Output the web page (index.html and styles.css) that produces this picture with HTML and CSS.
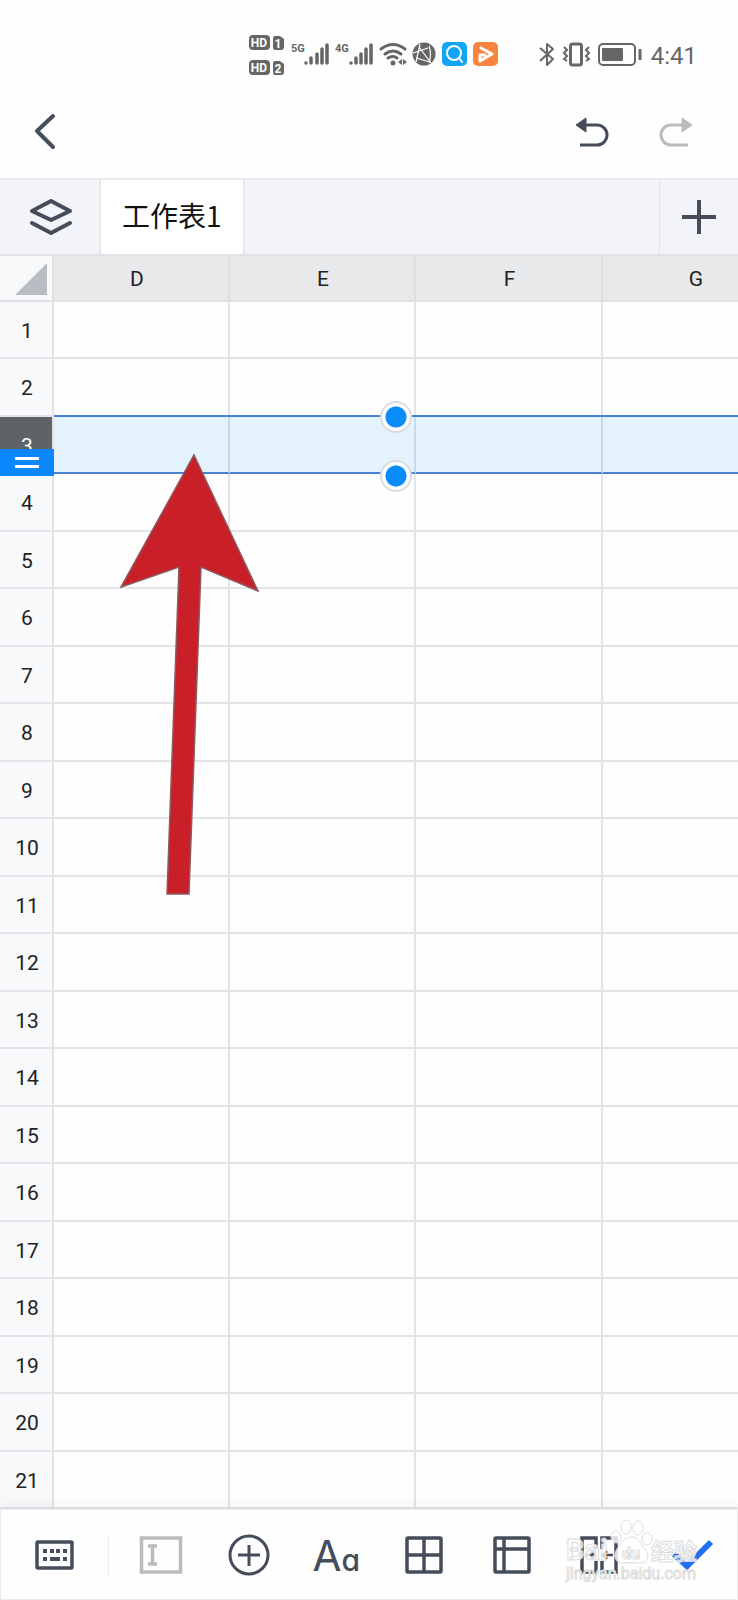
FILE: index.html
```
<!DOCTYPE html>
<html lang="zh-CN">
<head>
    <meta charset="UTF-8">
    <meta name="viewport" content="width=device-width, initial-scale=1.0">
    <title>工作表1</title>
    <link rel="stylesheet" href="styles.css">
</head>
<body>
    <div class="status-bar">
        <svg width="250" height="42" viewBox="0 0 250 42">
            <g fill="#666">
                <rect x="1" y="1" width="21" height="15" rx="4"/>
                <path d="M27 2h5l4 3v8q0 3-3 3h-6q-2 0-2-3v-9q0-2 2-2z"/>
                <rect x="1" y="26" width="21" height="15" rx="4"/>
                <path d="M27 27h5l4 3v8q0 3-3 3h-6q-2 0-2-3v-9q0-2 2-2z"/>
            </g>
            <g class="badge-text">
                <text x="11" y="13">HD</text>
                <text x="30" y="14">1</text>
                <text x="11" y="38">HD</text>
                <text x="30" y="39">2</text>
            </g>
            <text class="net-text" x="43" y="18">5G</text>
            <text class="net-text" x="87" y="18">4G</text>
            <path d="M58 29v0M63 29v-5M69 29v-9M74 29v-14M79 29v-18M103 29v0M108 29v-5M113 29v-9M118 29v-14M123 29v-18" stroke="#666" stroke-width="3.500" stroke-linecap="round"/>
            <g fill="none" stroke="#666" stroke-width="3" stroke-linecap="round">
                <path d="M133 15q12-9 24 0M137 20q8-6 16 0M140 24q5-3 9 0"/>
            </g>
            <circle cx="145" cy="29" r="2.5" fill="#666"/>
            <path d="M154 25v6l-4-3zM155 25v6l4-3z" fill="#666"/>
            <circle cx="176" cy="20" r="11.5" fill="#666"/>
            <path d="M165 19l15-5M172 10l-4 18M168 24l14 4M171 13l12 16M181 12q3 8 0 17" fill="none" stroke="#fff" stroke-width="1.2"/>
            <rect x="194" y="8" width="25" height="24" rx="5" fill="#12a5f6"/>
            <circle cx="206" cy="19" r="7" fill="none" stroke="#fff" stroke-width="2"/>
            <path d="M211 24l3 4" stroke="#fff" stroke-width="2" stroke-linecap="round"/>
            <rect x="225" y="8" width="25" height="24" rx="5" fill="#f98440"/>
            <path d="M233 14l11 6-12 7v-6h5" fill="none" stroke="#fff" stroke-width="3" stroke-linejoin="round" stroke-linecap="round"/>
        </svg>
        <div class="status-right">
            <svg width="104" height="42" viewBox="0 0 104 42" fill="none" stroke="#666" stroke-width="2">
                <path d="M2 14l13 11-6 6V10l6 5L2 27" stroke-linejoin="round"/>
                <rect x="32.500" y="10" width="11" height="21" rx="2" stroke-width="3"/>
                <path d="M26 13l3 3-3 3 3 3-3 3 3 2M51 13l-3 3 3 3-3 3 3 3-3 2"/>
                <rect x="61" y="10" width="36" height="21" rx="4"/>
                <rect x="64" y="14" width="21" height="13" rx="1" fill="#666" stroke="none"/>
                <path d="M102 15v11" stroke-width="3"/>
            </svg>
            <span class="clock">4:41</span>
        </div>
    </div>

    <header class="toolbar">
        <button class="icon-btn" aria-label="返回">
            <svg width="34" height="40" viewBox="0 0 34 40"><path d="M25 5L9 20l16 16" fill="none" stroke="#464d5a" stroke-width="4" stroke-linecap="round" stroke-linejoin="round"/></svg>
        </button>
        <div class="history">
            <button class="icon-btn" aria-label="撤销">
                <svg width="34" height="32" viewBox="0 0 34 32"><path d="M10 8h12a10 10 0 0 1 0 20H5" fill="none" stroke="#464d5a" stroke-width="3"/><path d="M1 8L11 1v14z" fill="#464d5a" stroke="#464d5a" stroke-linejoin="round"/></svg>
            </button>
            <button class="icon-btn" aria-label="重做" disabled>
                <svg width="34" height="32" viewBox="0 0 34 32"><path d="M24 8H12a10 10 0 0 0 0 20h17" fill="none" stroke="#b9bbbf" stroke-width="3"/><path d="M33 8L23 1v14z" fill="#b9bbbf" stroke="#b9bbbf" stroke-linejoin="round"/></svg>
            </button>
        </div>
    </header>

    <nav class="tabs">
        <button class="icon-btn layers" aria-label="所有工作表">
            <svg width="44" height="38" viewBox="0 0 44 38" fill="none" stroke="#464d5a" stroke-width="4" stroke-linejoin="round" stroke-linecap="round"><path d="M22 3L41 13 22 22 3 13zM3 25l19 10 19-10"/></svg>
        </button>
        <button class="tab">工作表1</button>
        <button class="icon-btn add" aria-label="新建工作表">
            <svg width="34" height="34" viewBox="0 0 34 34"><path d="M17 0v34M0 17h34" stroke="#464d5a" stroke-width="4"/></svg>
        </button>
    </nav>

    <main class="sheet">
        <table>
            <colgroup>
                <col class="col-num"><col class="col-first"><col class="col"><col class="col-wide"><col class="col">
            </colgroup>
            <thead>
                <tr>
                    <th class="corner"><svg width="32" height="32" viewBox="0 0 32 32"><path d="M32 0v32H0z" fill="#b9bdc3"/></svg></th>
                    <th class="cut">D</th><th>E</th><th>F</th><th>G</th>
                </tr>
            </thead>
            <tbody>
                <tr><th>1</th><td></td><td></td><td></td><td></td></tr>
                <tr><th>2</th><td></td><td></td><td></td><td></td></tr>
                <tr class="selected">
                    <th>3<span class="resize"></span></th>
                    <td></td>
                    <td><span class="knob knob-top"></span><span class="knob knob-bottom"></span></td>
                    <td></td>
                    <td></td>
                </tr>
                <tr><th>4</th><td></td><td></td><td></td><td></td></tr>
                <tr><th>5</th><td></td><td></td><td></td><td></td></tr>
                <tr><th>6</th><td></td><td></td><td></td><td></td></tr>
                <tr><th>7</th><td></td><td></td><td></td><td></td></tr>
                <tr><th>8</th><td></td><td></td><td></td><td></td></tr>
                <tr><th>9</th><td></td><td></td><td></td><td></td></tr>
                <tr><th>10</th><td></td><td></td><td></td><td></td></tr>
                <tr><th>11</th><td></td><td></td><td></td><td></td></tr>
                <tr><th>12</th><td></td><td></td><td></td><td></td></tr>
                <tr><th>13</th><td></td><td></td><td></td><td></td></tr>
                <tr><th>14</th><td></td><td></td><td></td><td></td></tr>
                <tr><th>15</th><td></td><td></td><td></td><td></td></tr>
                <tr><th>16</th><td></td><td></td><td></td><td></td></tr>
                <tr><th>17</th><td></td><td></td><td></td><td></td></tr>
                <tr><th>18</th><td></td><td></td><td></td><td></td></tr>
                <tr><th>19</th><td></td><td></td><td></td><td></td></tr>
                <tr><th>20</th><td></td><td></td><td></td><td></td></tr>
                <tr><th>21</th><td></td><td></td><td></td><td></td></tr>
            </tbody>
        </table>
        <svg class="arrow" width="140" height="444" viewBox="0 0 140 444"><path d="M74 2L138 138 81 114 69 441H47L59 114 1 134z" fill="#c81f28" stroke="#8d5a60" stroke-width="1.500"/></svg>
    </main>

    <footer class="bottom-bar">
        <button class="icon-btn keyboard" aria-label="键盘">
            <svg width="40" height="30" viewBox="0 0 40 30"><rect x="2" y="2" width="35" height="26" rx="1" fill="none" stroke="#464d5a" stroke-width="3.500"/><path d="M8 11h4M15 11h4M21 11h4M28 11h4M8 19h4M15 19h10M28 19h4" stroke="#464d5a" stroke-width="4"/></svg>
        </button>
        <button class="icon-btn" aria-label="编辑文本" disabled>
            <svg width="44" height="38" viewBox="0 0 44 38" fill="none" stroke="#bbb" stroke-width="3.500"><rect x="2.500" y="2" width="39" height="34"/><path d="M9 10h9M9 28h9M13.500 10v18"/></svg>
        </button>
        <button class="icon-btn" aria-label="插入">
            <svg width="42" height="42" viewBox="0 0 42 42" fill="none" stroke="#464d5a" stroke-width="3"><circle cx="21" cy="21" r="19"/><path d="M21 11v21M10 21h22"/></svg>
        </button>
        <button class="icon-btn font" aria-label="字体">A<small>a</small></button>
        <button class="icon-btn" aria-label="边框">
            <svg width="38" height="38" viewBox="0 0 38 38" fill="none" stroke="#464d5a" stroke-width="3.500"><rect x="2" y="2" width="34" height="34" rx="1"/><path d="M19 2v34M2 19h34"/></svg>
        </button>
        <button class="icon-btn" aria-label="冻结">
            <svg width="38" height="38" viewBox="0 0 38 38" fill="none" stroke="#464d5a" stroke-width="3.500"><rect x="2" y="2" width="34" height="34" rx="1"/><path d="M11 2v34M2 13h34"/></svg>
        </button>
        <button class="icon-btn" aria-label="合并单元格">
            <svg width="38" height="38" viewBox="0 0 38 38" fill="none" stroke="#464d5a" stroke-width="3.500"><path d="M16 13V2H2v34h14V25M22 13V2h14v34H22V25"/><path d="M5 19h9M33 19h-9M11 15l4 4-4 4M27 15l-4 4 4 4" stroke-width="2.500"/></svg>
        </button>
        <button class="icon-btn done" aria-label="完成">
            <svg width="42" height="32" viewBox="0 0 42 32"><path d="M2 15l13 12L39 3" fill="none" stroke="#2370f2" stroke-width="6"/></svg>
        </button>
        <div class="watermark">
            <svg width="150" height="68" viewBox="0 -4 150 68">
                <g fill="#fff" fill-opacity=".8" stroke="#ddd">
                    <ellipse cx="53" cy="14" rx="5" ry="6"/>
                    <ellipse cx="63" cy="4" rx="5" ry="7"/>
                    <ellipse cx="75" cy="5" rx="5" ry="7"/>
                    <ellipse cx="84" cy="16" rx="5" ry="6"/>
                    <path d="M69 14c7 0 8 7 13 12 6 7 2 14-5 14-4 0-11-1-16 0-8 1-12-7-7-14 4-5 7-12 15-12z"/>
                </g>
                <g class="mark">
                    <text class="mark-big" x="3" y="37">Bai</text>
                    <text class="mark-du" x="59" y="36">du</text>
                    <text class="mark-cn" x="88" y="37">经验</text>
                    <text class="mark-url" x="3" y="56">jingyan.baidu.com</text>
                </g>
            </svg>
        </div>
    </footer>
</body>
</html>
```
FILE: styles.css
```
* {
    box-sizing: border-box;
}
body {
    margin: 0;
    min-height: 100vh;
    display: flex;
    flex-direction: column;
    overflow-x: hidden;
    background-color: #fefefe;
    color: #222;
    font-family: Roboto, "Noto Sans CJK SC", sans-serif;
}
svg {
    display: block;
}
button {
    border: none;
    background: none;
    padding: 0;
    color: inherit;
    font-family: inherit;
    cursor: pointer;
}
.icon-btn {
    display: flex;
    align-items: center;
    justify-content: center;
}

/* status bar */
.status-bar {
    height: 90px;
    padding: 20px 41px 0 0;
    display: flex;
    align-items: center;
    justify-content: flex-end;
    gap: 40px;
}
.status-right {
    display: flex;
    align-items: center;
    gap: 9px;
}
.clock {
    padding-top: 2px;
    font-size: 24px;
    line-height: 42px;
    color: #666;
}
.badge-text {
    fill: #fff;
    font-size: 12px;
    font-weight: 700;
    text-anchor: middle;
}
.net-text {
    fill: #666;
    font-size: 11px;
    font-weight: 700;
}

/* top toolbar */
.toolbar {
    height: 90px;
    padding: 0 45px 6px 28px;
    display: flex;
    align-items: center;
    justify-content: space-between;
    border-bottom: 2px solid #ebebed;
}
.history {
    display: flex;
    gap: 50px;
    padding-top: 4px;
}

/* sheet tabs */
.tabs {
    height: 76px;
    display: flex;
    background-color: #f3f4f9;
    border-bottom: 2px solid #e0e2e6;
}
.layers {
    width: 101px;
    padding-left: 3px;
    border-right: 2px solid #e8e9ee;
}
.tab {
    padding: 0 21px 4px;
    background-color: #fff;
    border-right: 2px solid #e8e9ee;
    font-family: "Noto Sans CJK SC", sans-serif;
    font-size: 28px;
    color: #111;
}
.add {
    width: 79px;
    margin-left: auto;
    border-left: 1px solid #e0e2e6;
}

/* grid */
.sheet {
    flex: 1;
    position: relative;
    overflow: hidden;
}
table {
    table-layout: fixed;
    width: 789px;
    border-collapse: separate;
    border-spacing: 0;
}
.col-num {
    width: 54px;
}
.col-first {
    width: 176px;
}
.col {
    width: 186px;
}
.col-wide {
    width: 187px;
}
th, td {
    height: 57px;
    padding: 2px 0 0 2px;
    border-right: 2px solid #e3e4e9;
    border-bottom: 2px solid #e3e4e9;
}
tr:nth-child(even) th, tr:nth-child(even) td {
    height: 58px;
}
th {
    font-size: 21px;
    font-weight: 400;
    background-color: #f8f9fb;
}
thead th {
    height: 46px;
    background-color: #e8e9eb;
    border-color: #dfe0e4;
}
thead .corner {
    padding-left: 15px;
    background-color: #f8f9fb;
}
thead .cut {
    padding-right: 10px;
}
.selected th {
    position: relative;
    background-color: #5f6368;
    color: #fff;
}
.selected td {
    position: relative;
    background-color: #e4f2fe;
    border-right-color: #c9d8ea;
    border-bottom-color: #4a82d0;
    box-shadow: 0 -2px #4a82d0;
}
.resize {
    position: absolute;
    left: 0;
    right: -2px;
    bottom: -4px;
    height: 27px;
    background-color: #0a87fb;
}
.resize::before {
    content: "";
    position: absolute;
    left: 15px;
    right: 15px;
    top: 8px;
    height: 5px;
    border-top: 3px solid #fff;
    border-bottom: 3px solid #fff;
}
.knob {
    position: absolute;
    z-index: 1;
    left: 150px;
    width: 32px;
    height: 32px;
    border: 2px solid #dcdcde;
    border-radius: 50%;
    background: radial-gradient(circle, #0a8cfa 10px, #fff 11px);
}
.knob-top {
    top: -16px;
}
.knob-bottom {
    bottom: -20px;
}
.arrow {
    position: absolute;
    left: 120px;
    top: 197px;
}

/* bottom toolbar */
.bottom-bar {
    position: relative;
    height: 91px;
    display: flex;
    background-color: #fefefe;
    border: 1px solid #ebebed;
    box-shadow: 0 -4px 16px rgba(0, 0, 0, 0.05);
}
.bottom-bar .icon-btn {
    flex: 1;
}
.bottom-bar .keyboard {
    position: relative;
    flex: 0 0 108px;
    margin-right: 8px;
}
.keyboard::after {
    content: "";
    position: absolute;
    right: 0;
    height: 40px;
    border-right: 1px solid #eee;
}
.bottom-bar .font {
    align-items: baseline;
    padding-top: 18px;
    font-family: Inter, sans-serif;
    font-size: 42px;
    font-weight: 400;
    line-height: 56px;
    color: #464d5a;
    font-feature-settings: "cv11";
}
.font small {
    font-size: 30px;
    font-weight: 500;
}
.bottom-bar .done {
    flex: 0 0 94px;
    padding-left: 6px;
}
.watermark {
    position: absolute;
    right: 24px;
    bottom: 12px;
    pointer-events: none;
}
.mark {
    fill: #fff;
    fill-opacity: 0.8;
    stroke: #ddd;
    stroke-width: 1px;
    font-weight: 700;
}
.mark-big {
    font-size: 29px;
}
.mark-du {
    font-size: 16px;
}
.mark-cn {
    font-size: 23px;
}
.mark-url {
    font-size: 16px;
    font-weight: 400;
}
```
